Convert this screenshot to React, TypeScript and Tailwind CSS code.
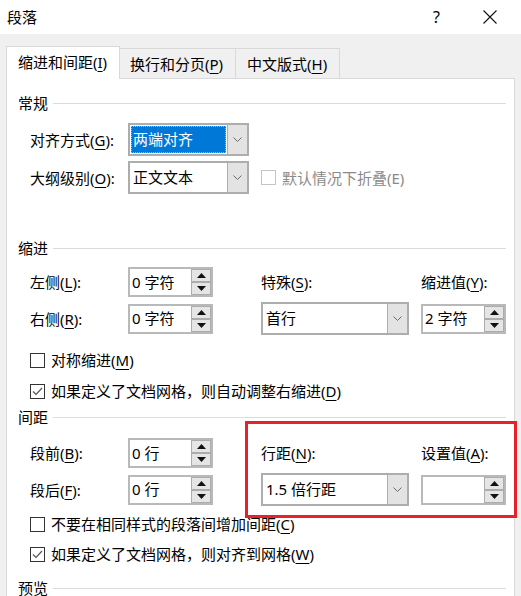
import type { ReactNode } from 'react';

const Key = ({ children }: { children: ReactNode }) => (
  <span className="underline underline-offset-[3px] decoration-1">{children}</span>
);

const Section = ({ title, className = '' }: { title: string; className?: string }) => (
  <div className={`flex items-center h-[20px] gap-[5px] ${className}`}>
    <span className="leading-[20px]">{title}</span>
    <div className="flex-1 h-px bg-[#dcdcdc]" />
  </div>
);

const Chevron = () => (
  <svg width="9" height="6" viewBox="0 0 9 6">
    <path d="M0.5 0.5 L4.5 4.5 L8.5 0.5" fill="none" stroke="#6a6a6a" strokeWidth="1" />
  </svg>
);

const Combo = ({
  value,
  width,
  selected = false,
}: {
  value: string;
  width: string;
  selected?: boolean;
}) => (
  <div className={`flex h-[33px] ${width} border-2 border-[#adadad] bg-white`}>
    <div className="flex-1 flex items-center p-[1px]">
      {selected ? (
        <div className="w-full h-full flex items-center bg-[#0078d7] text-white px-[1px] border border-dotted border-[#f5b041]">
          {value}
        </div>
      ) : (
        <span className="pl-[2px]">{value}</span>
      )}
    </div>
    <div className="w-[20px] flex items-center justify-center bg-[#e3e3e3] border-l border-[#adadad]">
      <Chevron />
    </div>
  </div>
);

const SpinBtn = ({ up }: { up: boolean }) => (
  <div className="flex-1 flex items-center justify-center bg-[#e5e5e5] border border-[#acacac]">
    <svg width="9" height="5" viewBox="0 0 9 5">
      <path d={up ? 'M0 5 L4.5 0 L9 5 Z' : 'M0 0 L4.5 5 L9 0 Z'} fill="#111" />
    </svg>
  </div>
);

const Spin = ({ value = '' }: { value?: string }) => (
  <div className="flex h-[30px] w-[85px] border-2 border-[#b9b9b9] bg-white">
    <div className="flex-1 flex items-center pl-[2px]">{value}</div>
    <div className="w-[20px] flex flex-col py-[0px] pr-[0px]">
      <SpinBtn up />
      <SpinBtn up={false} />
    </div>
  </div>
);

const Check = ({
  checked = false,
  children,
  className = '',
}: {
  checked?: boolean;
  children: ReactNode;
  className?: string;
}) => (
  <div className={`flex items-center h-[20px] gap-[6px] ${className}`}>
    <div className="w-[15px] h-[15px] border border-[#333] bg-white flex items-center justify-center">
      {checked && (
        <svg width="11" height="9" viewBox="0 0 11 9">
          <path d="M1 4.5 L4 7.5 L10 1" fill="none" stroke="#555" strokeWidth="1.2" />
        </svg>
      )}
    </div>
    <span className="leading-[20px] whitespace-nowrap">{children}</span>
  </div>
);

export default function App() {
  return (
    <div className="relative w-[521px] h-[596px] overflow-hidden bg-[#f0f0f0] text-[15px] text-black font-['Noto_Sans','Noto_Sans_CJK_SC',sans-serif]">
      {/* Title bar */}
      <div className="h-[34px] bg-white flex items-center pl-[7px]">
        <span className="leading-[20px]">段落</span>
        <span className="ml-auto leading-[20px] text-[16px]">?</span>
        <div className="w-[14px] h-[14px] ml-[43px] mr-[24px]">
          <svg width="14" height="14" viewBox="0 0 14 14">
            <path d="M0.5 0.5 L13.5 13.5 M13.5 0.5 L0.5 13.5" stroke="#111" strokeWidth="1.1" />
          </svg>
        </div>
      </div>

      {/* Tabs */}
      <div className="pt-[11px] pl-[6px] flex items-end h-[45px]">
        <div className="relative z-10 w-[114px] h-[33px] bg-white border border-b-0 border-[#d9d9d9] flex items-center pl-[11px] pb-[1px]">
          缩进和间距(<Key>I</Key>)
        </div>
        <div className="w-[116px] h-[31px] border border-l-0 border-b-0 border-[#d9d9d9] flex items-center pl-[10px]">
          换行和分页(<Key>P</Key>)
        </div>
        <div className="w-[104px] h-[31px] border border-l-0 border-b-0 border-[#d9d9d9] flex items-center pl-[11px]">
          中文版式(<Key>H</Key>)
        </div>
      </div>

      {/* Panel */}
      <div className="-mt-px ml-[6px] w-[509px] h-[560px] bg-white border border-[#d9d9d9] pl-[11px] pr-[8px]">
        <Section title="常规" className="mt-[14px]" />
        <div className="pl-[12px]">
          <div className="flex items-center mt-[10px]">
            <span className="w-[98px] leading-[20px]">
              对齐方式(<Key>G</Key>):
            </span>
            <Combo value="两端对齐" width="w-[121px]" selected />
          </div>
          <div className="flex items-center mt-[5px]">
            <span className="w-[98px] leading-[20px]">
              大纲级别(<Key>O</Key>):
            </span>
            <Combo value="正文文本" width="w-[121px]" />
            <div className="ml-[12px] flex items-center gap-[6px] text-[#8a8a8a]">
              <div className="w-[15px] h-[15px] border border-[#c4c4c4]" />
              <span className="leading-[20px]">默认情况下折叠(E)</span>
            </div>
          </div>
        </div>

        <Section title="缩进" className="mt-[44px]" />
        <div className="pl-[12px] mt-[9px] grid grid-cols-[98px_85px_48px_148px_12px_85px] gap-y-[5px] items-center">
          <span className="leading-[20px]">
            左侧(<Key>L</Key>):
          </span>
          <Spin value="0 字符" />
          <span />
          <span className="leading-[20px]">
            特殊(<Key>S</Key>):
          </span>
          <span />
          <span className="leading-[20px]">
            缩进值(<Key>Y</Key>):
          </span>

          <span className="leading-[20px]">
            右侧(<Key>R</Key>):
          </span>
          <Spin value="0 字符" />
          <span />
          <Combo value="首行" width="w-[148px]" />
          <span />
          <Spin value="2 字符" />
        </div>
        <div className="pl-[12px]">
          <Check className="mt-[15px]">
            对称缩进(<Key>M</Key>)
          </Check>
          <Check checked className="mt-[11px]">
            如果定义了文档网格，则自动调整右缩进(<Key>D</Key>)
          </Check>
        </div>

        <Section title="间距" className="mt-[6px]" />
        <div className="pl-[12px] mt-[11px] grid grid-cols-[98px_85px_48px_148px_12px_85px] gap-y-[5px] items-center">
          <span className="leading-[20px]">
            段前(<Key>B</Key>):
          </span>
          <Spin value="0 行" />
          <span />
          <span className="leading-[20px]">
            行距(<Key>N</Key>):
          </span>
          <span />
          <span className="leading-[20px]">
            设置值(<Key>A</Key>):
          </span>

          <span className="leading-[20px]">
            段后(<Key>F</Key>):
          </span>
          <Spin value="0 行" />
          <span />
          <Combo value="1.5 倍行距" width="w-[148px]" />
          <span />
          <Spin />
        </div>
        <div className="pl-[12px]">
          <Check className="mt-[8px]">
            不要在相同样式的段落间增加间距(<Key>C</Key>)
          </Check>
          <Check checked className="mt-[10px]">
            如果定义了文档网格，则对齐到网格(<Key>W</Key>)
          </Check>
        </div>

        <Section title="预览" className="mt-[14px]" />
      </div>

      {/* Red highlight annotation */}
      <div className="absolute left-[245px] top-[421px] w-[272px] h-[97px] border-[3px] border-[#e8202a] pointer-events-none" />
    </div>
  );
}
